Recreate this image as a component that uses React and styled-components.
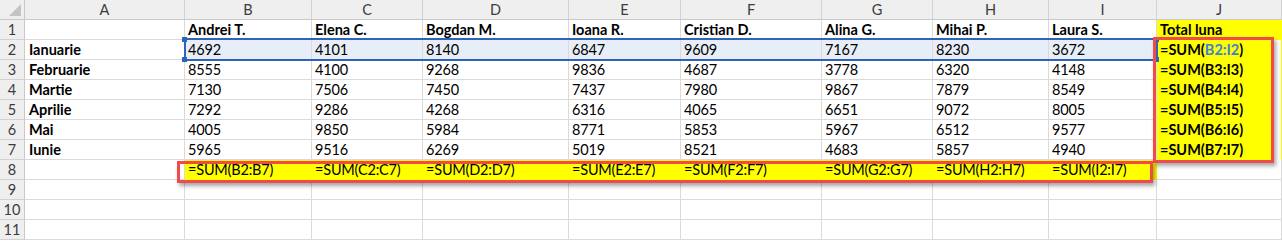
import React from 'react'
import styled, { createGlobalStyle } from 'styled-components'

const GlobalStyle = createGlobalStyle`
  html, body { margin: 0; padding: 0; background: #fff; }
  body { font-family: Lato, "Open Sans", sans-serif; }
`

const COLS = ['A', 'B', 'C', 'D', 'E', 'F', 'G', 'H', 'I', 'J']
const WIDTHS = [160, 127, 111, 146, 112, 141, 111, 116, 108]
const ROW_H = 20
const ROW_HDR = 25

const names = ['Andrei T.', 'Elena C.', 'Bogdan M.', 'Ioana R.', 'Cristian D.', 'Alina G.', 'Mihai P.', 'Laura S.']

const data = [
  ['Ianuarie', 4692, 4101, 8140, 6847, 9609, 7167, 8230, 3672],
  ['Februarie', 8555, 4100, 9268, 9836, 4687, 3778, 6320, 4148],
  ['Martie', 7130, 7506, 7450, 7437, 7980, 9867, 7879, 8549],
  ['Aprilie', 7292, 9286, 4268, 6316, 4065, 6651, 9072, 8005],
  ['Mai', 4005, 9850, 5984, 8771, 5853, 5967, 6512, 9577],
  ['Iunie', 5965, 9516, 6269, 5019, 8521, 4683, 5857, 4940],
]

const Sheet = styled.div`
  position: relative;
  display: grid;
  grid-template-columns: ${ROW_HDR}px ${WIDTHS.map(w => w + 'px').join(' ')} 1fr;
  grid-auto-rows: ${ROW_H}px;
  width: 1282px;
  overflow: hidden;
  font-size: 14.5px;
  color: #000;
`

const Corner = styled.div`
  position: relative;
  background: #efefef;
  border-right: 1px solid #c9c9c9;
  border-bottom: 1px solid #c9c9c9;
  &::after {
    content: '';
    position: absolute;
    right: 3px;
    bottom: 3px;
    width: 0;
    height: 0;
    border-left: 12px solid transparent;
    border-bottom: 12px solid #c3c3c3;
  }
`

const ColHead = styled.div`
  background: #efefef;
  border-right: 1px solid #d2d2d2;
  border-bottom: 1px solid #c9c9c9;
  color: #3c3c3c;
  text-align: center;
  line-height: ${ROW_H - 1}px;
`

const RowHead = styled.div`
  background: #efefef;
  border-right: 1px solid #c9c9c9;
  border-bottom: 1px solid #d2d2d2;
  color: #3c3c3c;
  text-align: center;
  line-height: ${ROW_H - 1}px;
`

const Cell = styled.div`
  border-right: 1px solid #dadada;
  border-bottom: 1px solid #dadada;
  padding-left: ${p => (p.$first ? 4 : 3)}px;
  line-height: ${ROW_H - 1}px;
  white-space: nowrap;
  overflow: visible;
  letter-spacing: ${p => (p.$bold ? 0 : -0.2)}px;
  font-weight: ${p => (p.$bold ? 700 : 400)};
  background: ${p =>
    p.$fill === 'yellow'
      ? '#ffff00'
      : p.$fill === 'clip'
      ? 'linear-gradient(to right, #ffff00 117px, #fff 117px)'
      : p.$fill === 'sel'
      ? '#e8eef8'
      : '#fff'};
  ${p => (p.$fill === 'yellow' || p.$fill === 'clip' ? 'border-color: transparent;' : '')}
`

const Ref = styled.span`
  color: #3f7fd6;
`

const Selection = styled.div`
  position: absolute;
  left: ${p => p.$left}px;
  top: ${p => p.$top}px;
  width: ${p => p.$width}px;
  height: ${p => p.$height}px;
  border-top: 2px solid #2f63b8;
  border-bottom: 2px solid #2f63b8;
  box-sizing: border-box;
  pointer-events: none;
`

const SelSide = styled.div`
  position: absolute;
  top: -2px;
  bottom: -2px;
  ${p => (p.$right ? 'right: -1px;' : 'left: -1px;')}
  width: 2px;
  background: #2f63b8;
  &::before, &::after {
    content: '';
    position: absolute;
    left: -2px;
    width: 5px;
    height: 5px;
    background: #2f63b8;
  }
  &::before { top: -1px; }
  &::after { bottom: -1px; }
`

const Callout = styled.div`
  position: absolute;
  left: ${p => p.$left}px;
  top: ${p => p.$top}px;
  width: ${p => p.$width}px;
  height: ${p => p.$height}px;
  box-sizing: border-box;
  border: 3px solid #f04a4c;
  box-shadow: 2px 3px 4px rgba(0, 0, 0, 0.35);
  pointer-events: none;
`

const colLeft = i => ROW_HDR + WIDTHS.slice(0, i).reduce((a, b) => a + b, 0)

function App() {
  const jFormula = r => `=SUM(B${r}:I${r})`
  return (
    <>
      <GlobalStyle />
      <Sheet>
        <Corner />
        {COLS.map(c => (
          <ColHead key={c}>{c}</ColHead>
        ))}

        <RowHead>1</RowHead>
        <Cell />
        {names.map(n => (
          <Cell key={n} $bold>{n}</Cell>
        ))}
        <Cell $bold $fill="yellow">Total luna</Cell>

        {data.map((row, ri) => {
          const r = ri + 2
          return (
            <React.Fragment key={r}>
              <RowHead>{r}</RowHead>
              <Cell $first $bold>{row[0]}</Cell>
              {row.slice(1).map((v, ci) => (
                <Cell key={ci} $fill={r === 2 ? 'sel' : undefined}>{v}</Cell>
              ))}
              <Cell $bold $fill="clip">
                {r === 2 ? (
                  <>=SUM(<Ref>B2:I2</Ref>)</>
                ) : (
                  jFormula(r)
                )}
              </Cell>
            </React.Fragment>
          )
        })}

        <RowHead>8</RowHead>
        <Cell />
        {COLS.slice(1, 9).map(c => (
          <Cell key={c} $fill="yellow">{`=SUM(${c}2:${c}7)`}</Cell>
        ))}
        <Cell />

        {[9, 10, 11].map(r => (
          <React.Fragment key={r}>
            <RowHead>{r}</RowHead>
            {COLS.map(c => (
              <Cell key={c} />
            ))}
          </React.Fragment>
        ))}

        <Selection $left={colLeft(1)} $top={38} $width={colLeft(9) - colLeft(1)} $height={23}>
          <SelSide />
          <SelSide $right />
        </Selection>
        <Callout $left={1153} $top={37} $width={121} $height={126} />
        <Callout $left={177} $top={161} $width={976} $height={22} />
      </Sheet>
    </>
  )
}

export default App
